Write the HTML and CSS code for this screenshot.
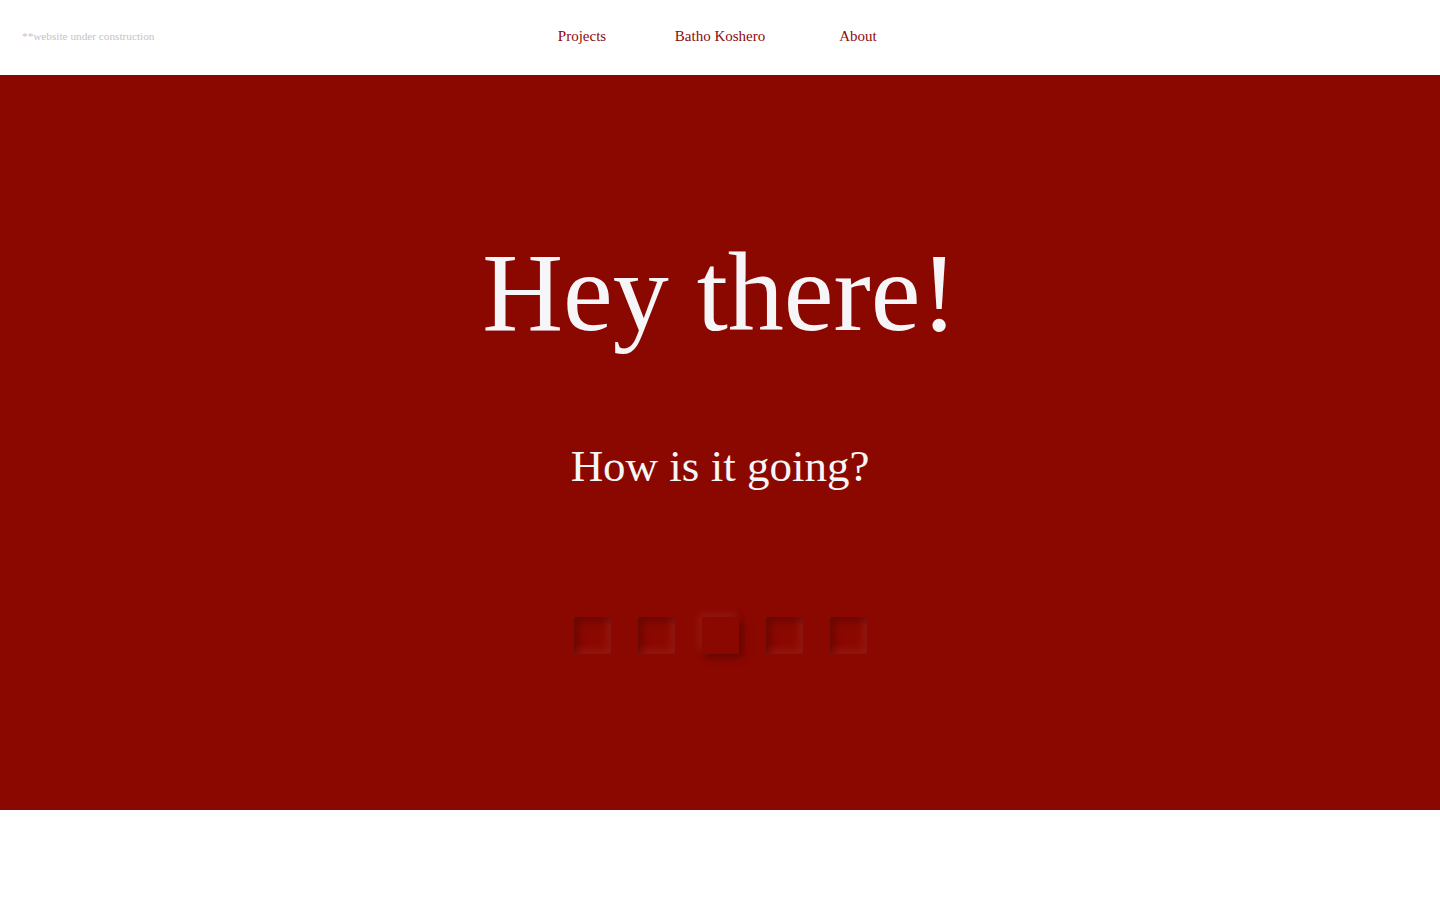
FILE: index.html
```html
<!DOCTYPE html>
<html lang="en">
<head>
<meta charset="utf-8">
<title>Batho Koshero</title>
<link rel="stylesheet" href="styles.css">
</head>
<body>
<header class="topbar">
  <p class="notice">**website under construction</p>
  <nav class="nav">
    <a class="nav-link" href="#">Projects</a>
    <a class="nav-link" href="#">Batho Koshero</a>
    <a class="nav-link" href="#">About</a>
  </nav>
</header>
<main class="hero">
  <h1 class="hero-title">Hey there!</h1>
  <p class="hero-sub">How is it going?</p>
  <div class="dots">
    <span class="dot"></span>
    <span class="dot"></span>
    <span class="dot dot-active"></span>
    <span class="dot"></span>
    <span class="dot"></span>
  </div>
</main>
</body>
</html>
```
FILE: styles.css
```css
html, body {
  margin: 0;
  padding: 0;
  background: #ffffff;
  font-family: "Liberation Serif", "Times New Roman", serif;
}

.topbar {
  position: relative;
  height: 75px;
  display: flex;
  align-items: center;
  justify-content: center;
}

.notice {
  position: absolute;
  left: 22px;
  top: 0;
  margin: 0;
  height: 75px;
  line-height: 73px;
  font-size: 11.25px;
  color: #c4c4c4;
}

.nav {
  display: flex;
  justify-content: center;
  margin-top: -3px;
}

.nav-link {
  width: 138px;
  text-align: center;
  font-size: 15px;
  color: #8b0a0a;
  text-decoration: none;
}

.hero {
  height: 735px;
  box-sizing: border-box;
  background: #8b0800;
  padding-top: 161px;
  display: flex;
  flex-direction: column;
  align-items: center;
}

.hero-title {
  margin: 0;
  font-weight: normal;
  font-size: 112px;
  line-height: 1;
  color: #f6f5f8;
}

.hero-sub {
  margin: 96px 0 0;
  font-size: 45px;
  line-height: 1;
  color: #f6f5f8;
}

.dots {
  margin-top: 128px;
  display: flex;
  gap: 27px;
}

.dot {
  width: 37px;
  height: 37px;
  background: #8b0800;
  box-shadow: inset 3px 3px 8px rgba(55, 0, 0, 0.5),
              inset -3px -3px 8px rgba(190, 75, 65, 0.35);
}

.dot-active {
  box-shadow: 3px 3px 8px rgba(55, 0, 0, 0.55),
              -3px -3px 8px rgba(190, 75, 65, 0.3);
}
```
